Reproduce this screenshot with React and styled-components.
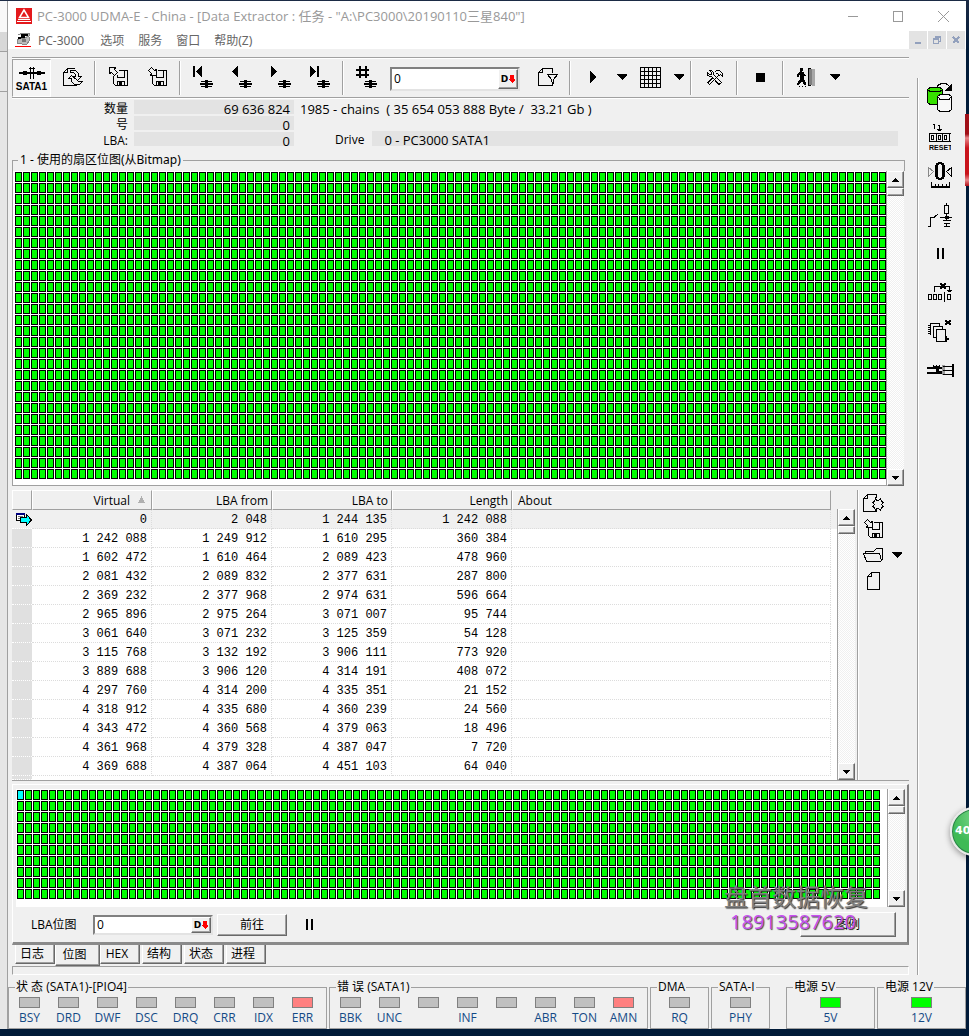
import React from "react";
import styled, { createGlobalStyle, css } from "styled-components";

const rows = [
  ["0", "2 048", "1 244 135", "1 242 088"],
  ["1 242 088", "1 249 912", "1 610 295", "360 384"],
  ["1 602 472", "1 610 464", "2 089 423", "478 960"],
  ["2 081 432", "2 089 832", "2 377 631", "287 800"],
  ["2 369 232", "2 377 968", "2 974 631", "596 664"],
  ["2 965 896", "2 975 264", "3 071 007", "95 744"],
  ["3 061 640", "3 071 232", "3 125 359", "54 128"],
  ["3 115 768", "3 132 192", "3 906 111", "773 920"],
  ["3 889 688", "3 906 120", "4 314 191", "408 072"],
  ["4 297 760", "4 314 200", "4 335 351", "21 152"],
  ["4 318 912", "4 335 680", "4 360 239", "24 560"],
  ["4 343 472", "4 360 568", "4 379 063", "18 496"],
  ["4 361 968", "4 379 328", "4 387 047", "7 720"],
  ["4 369 688", "4 387 064", "4 451 103", "64 040"],
];

const statusLeds = ["BSY", "DRD", "DWF", "DSC", "DRQ", "CRR", "IDX", "ERR"];
const errorLeds = ["BBK", "UNC", "", "INF", "", "ABR", "TON", "AMN"];
const tabs = ["日志", "位图", "HEX", "结构", "状态", "进程"];

const Icon = ({ w, h, children }) => (
  <Svg width={w} height={h} viewBox={`0 0 ${w} ${h}`} aria-hidden="true">
    {children}
  </Svg>
);

const Connector = ({ x, y }) => (
  <path
    transform={`translate(${x} ${y})`}
    d="M5 0h3v1h4v1H8v1h5v2H8v1h4v1H8v1H5V7H1V6h4V5H0V3h5V2H1V1h4z"
    fill="#000"
    stroke="none"
  />
);

const SataIcon = () => (
  <Icon w={26} h={12}>
    <path d="M0 5h26v2H0zM4 4h4v4H4zM18 4h4v4h-4z" fill="#000" stroke="none" />
    <path d="M11.5 0V12M14.5 0V12M10 1.5H16" />
  </Icon>
);

const RefreshIcon = () => (
  <Icon w={20} h={18}>
    <path d="M12 .5H4.5L.5 4.5V17.5H13.5V16M1 4.5H4.5V1" />
    <path d="M7.5 2.5H12.5L15.5 5.5V8.5H18.5L14.5 12.5 10.5 8.5H12.5V6.5L10.5 4.5H7.5ZM19.5 13.5H15.5L12.5 10.5H11.5L8.5 7.5 5.5 10.5H8.5V13.5L11.5 16.5H16.5L19.5 13.5" />
  </Icon>
);

const SaveIcon = ({ into }) => (
  <Icon w={20} h={20}>
    <path d="M10 3.5H18.5V18.5H6.5L4.5 16.5V9M8.5 8V10.5H15.5V4M8.5 18V14.5H15.5V18" />
    <path d="M10 15h3v3h-3z" fill="#000" stroke="none" />
    <path
      fill="#f0f0f0"
      d={
        into
          ? "M3.5 .5L6.5 3.5 8.5 2.5V8.5H2.5L3.5 6.5 .5 3.5Z"
          : "M.5 .5H6.5L5.5 2.5 8.5 5.5 5.5 8.5 2.5 5.5 .5 6.5Z"
      }
    />
  </Icon>
);

const navShapes = {
  first: "M0 0h2v11H0zM9 0v11L3 6V5z",
  prev: "M6 0v11L0 6V5z",
  next: "M0 0v11L6 6V5z",
  last: "M0 0v11L6 6V5zM7 0h2v11H7z",
  goto: "M3 0h2v3h4V0h2v3h2v2h-2v3h2v2h-2v2H9v-2H5v2H3v-2H0V8h3V5H0V3h3zM5 5v3h4V5z",
};

const NavIcon = ({ kind }) => (
  <Icon w={21} h={22}>
    <path d={navShapes[kind]} fill="#000" stroke="none" fillRule="evenodd" />
    <Connector x={kind === "goto" ? 8 : 7} y={14} />
  </Icon>
);

const FilterDocIcon = () => (
  <Icon w={20} h={19}>
    <path d="M14.5 5V.5H4.5L.5 4.5V17.5H14.5V15M1 4.5H4.5V1" />
    <path d="M9.5 6.5H19.5L15.5 11.5V15.5L13.5 13.5V11.5Z" fill="#f0f0f0" />
  </Icon>
);

const GridIcon = () => (
  <Icon w={21} h={21}>
    {[0, 4, 8, 12, 16, 20].map((n) => (
      <path key={n} d={`M${n} 0h1v21h-1zM0 ${n}h21v1H0z`} fill="#000" stroke="none" />
    ))}
  </Icon>
);

const ToolsIcon = () => (
  <Icon w={16} h={15}>
    <path d="M2.5 .5L4.5 2.5V4.5H2.5L.5 2.5V5L2.5 6.5H4.5L12 14.5 14.5 12.5 6.5 4.5V2.5L4.5 .5Z" />
    <path d="M7.5 2.5L9.5 .5H12.5L15.5 3.5V6L13.5 4.5 12.5 5.5 10.5 3.5 9.5 4M11.5 5.5L2.5 14.5 1 12.5 6 7.5" />
  </Icon>
);

const ExitIcon = () => (
  <Icon w={20} h={19}>
    <path
      d="M3 0h3v3H5v1h2l1 3h1v1H7v3l2 4v2H7l-2-4-3 4H0v-1l3-5V7H2v2H0V6l3-2z"
      fill="#000"
      stroke="none"
    />
    <path d="M2 18h1v1H2zM5 18h1v1H5zM8 18h1v1H8z" fill="#000" stroke="none" />
    <path d="M11 0h3v18h-3z" fill="#000" stroke="none" />
    <path d="M12 1h3v16h-3z" fill="#808080" stroke="none" />
    <path d="M15 1h3v17h-3z" fill="#a8a8a8" stroke="none" />
  </Icon>
);

const DocIcon = () => (
  <Icon w={13} h={18}>
    <path d="M4.5 .5H12.5V17.5H.5V4.5ZM1 4.5H4.5V1" />
  </Icon>
);

const GearDocIcon = () => (
  <Icon w={21} h={18}>
    <path d="M13.5 4V.5H4.5L.5 4.5V17.5H13.5V15M1 4.5H4.5V1" />
    <path
      fill="#f0f0f0"
      d="M12.5 4.5L13.5 6.5H15.5L17.5 4.5 18.5 7.5 20.5 8.5 18.5 10.5 20.5 12.5 18.5 13.5 17.5 16.5 15.5 14.5H13.5L12.5 16.5 11.5 13.5 9.5 12.5 11.5 10.5 9.5 8.5 11.5 7.5Z"
    />
  </Icon>
);

const FolderIcon = () => (
  <Icon w={21} h={14}>
    <path d="M2.5 5V3.5H10.5L13.5 .5H19.5V11M16.5 5.5H.5L3.5 13.5H17.5L19.5 11.5M16.5 5.5L18.5 13" />
  </Icon>
);

const DisksIcon = () => (
  <Icon w={26} h={31}>
    <path d="M10 4.5L12 2.5 15 1.5H19L22.5 4.5" />
    <path d="M25 1v8h-8z" fill="#000" stroke="none" />
    <path d="M.5 7.5L3 5.5H13L15.5 7.5V20.5L13 22.5H3L.5 20.5Z" fill="#36e000" />
    <path d="M.5 7.5L3 9.5H13L15.5 7.5" />
    <path d="M10.5 14.5L13 12.5H22L24.5 14.5V27.5L22 29.5H13L10.5 27.5Z" fill="#f8f8f8" />
    <path d="M10.5 14.5L13 17.5H22L24.5 14.5" />
  </Icon>
);

const ResetIcon = () => (
  <Icon w={22} h={28}>
    <path d="M4 1.5H5.5V6M9 2.5H10.5V8M8 6.5H13M9 7.5H12" />
    <path d="M.5 10.5H21.5M.5 18.5H21.5M.5 10V19M7.5 10V19M13.5 10V19M20.5 10V19M2.5 12.5H4.5V16.5H2.5ZM9.5 12.5H11.5V16.5H9.5ZM15.5 12.5H17.5V16.5H15.5Z" />
    <SvgLabel x="0" y="27">
      RESET
    </SvgLabel>
  </Icon>
);

const ZeroIcon = () => (
  <Icon w={24} h={27}>
    <path
      d="M10 0h4v1h2v2h1v12h-1v2h-2v1h-4v-1H8v-2H7V3h1V1h2zM11 2v1h-1v12h1v1h2v-1h1V3h-1V2z"
      fill="#000"
      stroke="none"
      fillRule="evenodd"
    />
    <path d="M.5 5.5L5.5 9.5 .5 14.5Z" stroke="#888" />
    <path d="M23.5 5.5L18.5 9.5 23.5 14.5Z" />
    <path d="M3 24h19v2H3zM3 20h1v4H3zM7 22h1v2H7zM10 22h1v2h-1zM14 22h1v2h-1zM18 22h1v2h-1zM21 20h1v4h-1z" fill="#000" stroke="none" />
  </Icon>
);

const SwitchIcon = () => (
  <Icon w={24} h={24}>
    <path d="M0 23.5H2.5V14.5H6M6 14.5L10 11M18.5 0V3M16.5 2.5H20.5V10.5H16.5ZM18.5 11V17M12 14.5H24M14.5 17.5H22.5M15.5 20.5H21.5M18.5 20V23M16 23.5H22" />
    <path d="M17 13h4v3h-4z" fill="#000" stroke="none" />
  </Icon>
);

const PauseIcon = () => (
  <Icon w={7} h={11}>
    <path d="M0 0h2v11H0zM5 0h2v11H5z" fill="#000" stroke="none" />
  </Icon>
);

const SkipIcon = () => (
  <Icon w={24} h={19}>
    <path d="M6.5 9V3.5H21.5V8M.5 11.5H3.5V16.5H.5ZM5.5 11.5H8.5V16.5H5.5ZM10.5 11.5H13.5V16.5H10.5ZM16.5 9V19M19.5 11.5H22.5V16.5H19.5Z" />
    <path d="M12 0h2v1h2V0h2v2h-1v2h1v2h-2V5h-2v1h-2V4h1V2h-1zM19 7h5v1h-1v1h-3V8h-1z" fill="#000" stroke="none" />
  </Icon>
);

const CopyStackIcon = () => (
  <Icon w={24} h={23}>
    <path d="M2 3.5H11.5V6M2.5 3V15M0 5.5H2M0 7.5H2M0 9.5H2M0 11.5H2M0 13.5H2M8 17.5H5.5V6.5H14.5V9" />
    <path d="M8.5 9.5H17.5V21.5H8.5Z" />
    <path d="M17 0h2v1h2V0h2v2h-1v1h1v2h-2V4h-2v1h-2V3h1V2h-1zM17 16h2v2h2v2h-2v2h-2z" fill="#000" stroke="none" />
  </Icon>
);

const PlugIcon = () => (
  <Icon w={27} h={13}>
    <path d="M0 3h6V1h1v1h2V1h1v1h2V1h1v2h2v2h-3v2h3v3H0V8h9V5H0z" fill="#000" stroke="none" />
    <path d="M15 1h3v10h-3z" fill="#999" stroke="none" />
    <path d="M16 2.5H25M16 6.5H25M16 10.5H25" />
    <path d="M25 0h2v13h-2z" fill="#000" stroke="none" />
  </Icon>
);

const Triangle = ({ dir = "down", small }) => (
  <Icon w={small ? 7 : 10} h={small ? 4 : 6}>
    <path
      d={
        small
          ? dir === "up"
            ? "M3 0h1v1h1v1h1v1h1v1H0V3h1V2h1V1h1z"
            : "M0 0h7v1H6v1H5v1H4v1H3V3H2V2H1V1H0z"
          : "M0 0h10v1L5 6 0 1z"
      }
      fill="#000"
      stroke="none"
    />
  </Icon>
);

const ScrollBar = ({ label }) => (
  <ScrollTrack>
    <ScrollButton aria-label={`${label} up`}>
      <Triangle dir="up" small />
    </ScrollButton>
    <ScrollThumb />
    <ScrollSpace />
    <ScrollButton aria-label={`${label} down`}>
      <Triangle small />
    </ScrollButton>
  </ScrollTrack>
);

const NumberField = ({ id, label, $width }) => (
  <FieldBox $width={$width}>
    <FieldInput id={id} aria-label={label} defaultValue="0" />
    <FieldButton aria-label="Decimal">
      D
      <Icon w={6} h={8}>
        <path d="M1 0h4v4h1v1L3 8 0 5V4h1z" fill="#f00" stroke="none" />
      </Icon>
    </FieldButton>
  </FieldBox>
);

const LedGroup = ({ title, names, on, color, spaced }) => (
  <LedBox $spaced={spaced}>
    <LedLegend>{title}</LedLegend>
    <LedRow $many={names.length > 1}>
      {names.map((name, i) => (
        <LedItem key={i}>
          <Led $color={on === i ? color : "#c0c0c0"} />
          <LedName>{name}</LedName>
        </LedItem>
      ))}
    </LedRow>
  </LedBox>
);

const App = () => {
  return (
    <Desktop>
      <GlobalStyle />
      <BackWindow />
      <Window>
        <TitleBar>
          <Icon w={16} h={16}>
            <path d="M0 0h16v16H0z" fill="#e3191c" stroke="none" />
            <path d="M8 2L3.5 9.5H12.5Z" fill="none" stroke="#fff" strokeWidth="1.5" shapeRendering="auto" />
            <path d="M5 9h6v1H5zM2 11h12v1H2zM1 13h14v1H1z" fill="#fff" stroke="none" />
          </Icon>
          <Title>
            PC-3000 UDMA-E - China - [Data Extractor : 任务 -
            &quot;A:\PC3000\20190110三星840&quot;]
          </Title>
          <CaptionButton aria-label="Minimize">
            <Icon w={11} h={11}>
              <path d="M0 5.5H10" stroke="#999" />
            </Icon>
          </CaptionButton>
          <CaptionButton aria-label="Maximize">
            <Icon w={11} h={11}>
              <path d="M.5 .5H9.5V10.5H.5Z" stroke="#999" fill="none" />
            </Icon>
          </CaptionButton>
          <CaptionButton aria-label="Close">
            <Icon w={11} h={11}>
              <path d="M0 0L11 11M11 0L0 11" stroke="#999" shapeRendering="auto" />
            </Icon>
          </CaptionButton>
        </TitleBar>

        <MenuBar>
          <Icon w={16} h={14}>
            <path d="M3 2L7 0H14V3L10 5H4L2 8V10L7 11H12L14 8V4" fill="#bbb" stroke="#888" />
            <path d="M6 1h7v2h-3v2H6v1H3V4h3z" fill="#000" stroke="none" />
            <path d="M7 6h4v3H7z" fill="#777" stroke="none" />
            <path d="M0 13h16v1H0z" fill="#f00" stroke="none" />
          </Icon>
          <MenuItem>PC-3000</MenuItem>
          <MenuItem>选项</MenuItem>
          <MenuItem>服务</MenuItem>
          <MenuItem>窗口</MenuItem>
          <MenuItem>帮助(Z)</MenuItem>
          <ChildButtons>
            <ChildButton aria-label="Minimize child">
              <Icon w={8} h={8}>
                <path d="M1 6h6v2H1z" fill="#93a1bd" stroke="none" />
              </Icon>
            </ChildButton>
            <ChildButton aria-label="Restore child">
              <Icon w={8} h={8}>
                <path d="M2.5 2V.5H7.5V5.5H6M.5 3.5H5.5V7.5H.5ZM0 2.5H6M2 1.5H8" stroke="#93a1bd" fill="none" />
              </Icon>
            </ChildButton>
            <ChildButton aria-label="Close child">
              <Icon w={8} h={8}>
                <path d="M1 1L7 7M7 1L1 7" stroke="#93a1bd" strokeWidth="2" />
              </Icon>
            </ChildButton>
          </ChildButtons>
        </MenuBar>

        <Body>
          <Main>
            <Toolbar>
              <PortButton>
                <SataIcon />
                SATA1
              </PortButton>
              <ToolButton aria-label="Refresh">
                <RefreshIcon />
              </ToolButton>
              <Separator />
              <ToolButton aria-label="Load map">
                <SaveIcon />
              </ToolButton>
              <ToolButton aria-label="Save map">
                <SaveIcon into />
              </ToolButton>
              <Separator />
              {["first", "prev", "next", "last"].map((kind) => (
                <ToolButton key={kind} aria-label={kind}>
                  <NavIcon kind={kind} />
                </ToolButton>
              ))}
              <Separator />
              <ToolButton aria-label="Go to">
                <NavIcon kind="goto" />
              </ToolButton>
              <NumberField id="chain" label="Chain number" $width="130px" />
              <ToolButton aria-label="Filter">
                <FilterDocIcon />
              </ToolButton>
              <Separator />
              <ToolButton aria-label="Start">
                <Icon w={7} h={12}>
                  <path d="M0 0l7 6-7 6z" fill="#000" stroke="none" />
                </Icon>
              </ToolButton>
              <ArrowButton aria-label="Start options">
                <Triangle />
              </ArrowButton>
              <ToolButton aria-label="Map">
                <GridIcon />
              </ToolButton>
              <ArrowButton aria-label="Map options">
                <Triangle />
              </ArrowButton>
              <Separator />
              <ToolButton aria-label="Tools">
                <ToolsIcon />
              </ToolButton>
              <Separator />
              <ToolButton aria-label="Stop">
                <Icon w={9} h={9}>
                  <path d="M0 0h9v9H0z" fill="#000" stroke="none" />
                </Icon>
              </ToolButton>
              <Separator />
              <ToolButton aria-label="Exit">
                <ExitIcon />
              </ToolButton>
              <ArrowButton aria-label="Exit options">
                <Triangle />
              </ArrowButton>
            </Toolbar>

            <Info>
              <Counters>
                <InfoLabel>数量</InfoLabel>
                <InfoValue>69 636 824</InfoValue>
                <InfoLabel>号</InfoLabel>
                <InfoValue>0</InfoValue>
                <InfoLabel>LBA:</InfoLabel>
                <InfoValue>0</InfoValue>
              </Counters>
              <Summary>
                <Chains>1985 - chains&nbsp; ( 35 654 053 888 Byte /&nbsp; 33.21 Gb )</Chains>
                <Drive>
                  Drive
                  <DriveName>0 - PC3000 SATA1</DriveName>
                </Drive>
              </Summary>
            </Info>

            <MapGroup>
              <MapLegend>1 - 使用的扇区位图(从Bitmap)</MapLegend>
            </MapGroup>
            <MapPanel>
              <MapArea>
                <Cells $rows={28} />
              </MapArea>
              <ScrollBar label="Map" />
            </MapPanel>

            <ChainArea>
              <ChainTable>
                <colgroup>
                  <col width="20" />
                  <col width="120" />
                  <col width="120" />
                  <col width="120" />
                  <col width="120" />
                  <col />
                  <col width="6" />
                </colgroup>
                <thead>
                  <tr>
                    <Th />
                    <Th>
                      Virtual
                      <SortMark>
                        <Icon w={7} h={7}>
                          <path d="M3.5 0L7 7H0Z" fill="#b0b0b0" stroke="none" />
                        </Icon>
                      </SortMark>
                    </Th>
                    <Th>LBA from</Th>
                    <Th>LBA to</Th>
                    <Th>Length</Th>
                    <Th $left>About</Th>
                    <Blank as="th" />
                  </tr>
                </thead>
                <tbody>
                  {rows.map((row, i) => (
                    <Row key={row[0]} $current={i === 0}>
                      <Marker $current={i === 0}>
                        {i === 0 && (
                          <Icon w={16} h={13}>
                            <path d="M.5 .5H8.5V7.5H.5Z" fill="#fff" />
                            <path d="M0 0h9v2H0z" fill="#000080" stroke="none" />
                            <path d="M2 3.5H7M2 5.5H5" stroke="#777" />
                            <path d="M4.5 4.5H10.5V1.5L15.5 7 10.5 12.5V9.5H4.5Z" fill="#0ff" />
                          </Icon>
                        )}
                      </Marker>
                      {row.map((cell, n) => (
                        <Td key={n}>{cell}</Td>
                      ))}
                      <Td />
                      <Blank />
                    </Row>
                  ))}
                  <CutRow>
                    <Marker />
                    <td colSpan={6} />
                  </CutRow>
                </tbody>
              </ChainTable>
              <ChainScroll>
                <ScrollBar label="Chains" />
              </ChainScroll>
              <ChainTools>
                <ChainButton aria-label="New map">
                  <GearDocIcon />
                </ChainButton>
                <ChainButton aria-label="Save list">
                  <SaveIcon into />
                </ChainButton>
                <ChainButton aria-label="Open list">
                  <FolderIcon />
                  <Triangle />
                </ChainButton>
                <ChainButton aria-label="Clear list">
                  <DocIcon />
                </ChainButton>
              </ChainTools>
            </ChainArea>

            <LowerPanel>
              <LowerMap>
                <LowerMapArea>
                  <Cells $rows={10} $marked />
                </LowerMapArea>
                <ScrollBar label="LBA map" />
              </LowerMap>
              <LowerControls>
                <label htmlFor="lba">LBA位图</label>
                <NumberField id="lba" label="LBA位图" $width="120px" />
                <PushButton $width="70px">前往</PushButton>
                <PauseButton aria-label="Pause">
                  <PauseIcon />
                </PauseButton>
                <LegendButton $width="96px">图例</LegendButton>
              </LowerControls>
              <Watermark>
                <WatermarkName>盘首数据恢复</WatermarkName>
                <WatermarkPhone>18913587620</WatermarkPhone>
              </Watermark>
            </LowerPanel>
            <Tabs role="tablist">
              {tabs.map((tab) => (
                <Tab key={tab} role="tab" aria-selected={tab === "位图"} $active={tab === "位图"}>
                  {tab}
                </Tab>
              ))}
            </Tabs>
            <Progress />
          </Main>

          <Sidebar>
            {[DisksIcon, ResetIcon, ZeroIcon, SwitchIcon, PauseIcon, SkipIcon, CopyStackIcon, PlugIcon].map(
              (Glyph, i) => (
                <SideButton key={i} aria-label={`Command ${i + 1}`}>
                  <Glyph />
                </SideButton>
              )
            )}
          </Sidebar>
        </Body>

        <StatusBar>
          <LedGroup title="状 态 (SATA1)-[PIO4]" names={statusLeds} on={7} color="#ff8080" />
          <LedGroup title="错 误 (SATA1)" names={errorLeds} on={7} color="#ff8080" />
          <LedGroup title="DMA" names={["RQ"]} />
          <LedGroup title="SATA-I" names={["PHY"]} />
          <LedGroup title="电源 5V" names={["5V"]} on={0} color="#0f0" spaced />
          <LedGroup title="电源 12V" names={["12V"]} on={0} color="#0f0" />
        </StatusBar>
      </Window>
      <RedTag />
      <Bubble>40</Bubble>
    </Desktop>
  );
};

const raised = css`
  border: 1px solid;
  border-color: #fff #696969 #696969 #fff;
  box-shadow: inset -1px -1px 0 #a0a0a0;
  background: #f0f0f0;
`;
const bareButton = css`
  display: flex;
  align-items: center;
  justify-content: center;
  padding: 0;
  border: none;
  background: none;
`;

const GlobalStyle = createGlobalStyle`
  * {
    box-sizing: border-box;
  }
  body {
    margin: 0;
    background: #001a38;
    color: #000;
    font: 12px/16px "Open Sans", "Noto Sans CJK SC", sans-serif;
  }
  button, input {
    color: inherit;
    font: inherit;
  }
`;
const Svg = styled.svg`
  display: block;
  flex: none;
  fill: none;
  stroke: #000;
  shape-rendering: crispEdges;
`;
const SvgLabel = styled.text`
  font: bold 7px "Liberation Sans", sans-serif;
  fill: #000;
  stroke: none;
`;
const Desktop = styled.div`
  position: relative;
  display: flex;
  overflow: hidden;
  padding: 1px 3px 8px 0;
  background: linear-gradient(#1c2b45, #001a38 50px);
`;
const BackWindow = styled.div`
  flex: none;
  width: 8px;
  border-right: 1px solid #a0a0a0;
  background: linear-gradient(
    #f8f8f8 31px,
    #d8d8d8 31px 50px,
    #a0a0a0 50px 51px,
    #e6e6e6 51px 90px,
    #a0a0a0 90px 91px,
    #e6e6e6 91px
  );
`;
const Window = styled.div`
  flex: 1;
  min-width: 0;
  background: #f0f0f0;
`;
const TitleBar = styled.header`
  display: flex;
  align-items: center;
  height: 30px;
  padding-left: 8px;
  background: #fff;
  color: #999;
`;
const Title = styled.h1`
  flex: 1;
  margin: 0 0 0 5px;
  font-size: 13px;
  font-weight: 400;
  white-space: nowrap;
`;
const CaptionButton = styled.button`
  ${bareButton}
  width: 45px;
  height: 28px;
`;
const MenuBar = styled.nav`
  display: flex;
  align-items: center;
  gap: 14px;
  height: 18px;
  padding-left: 7px;
  background: #fff;
  color: #666;
  font-family: "Noto Sans", "Noto Sans CJK SC", sans-serif;
`;
const MenuItem = styled.button`
  ${bareButton}
  padding-top: 2px;
  &:first-of-type {
    margin: 0 2px 0 -7px;
  }
`;
const ChildButtons = styled.div`
  display: flex;
  gap: 1px;
  margin-left: auto;
  padding-right: 1px;
`;
const ChildButton = styled.button`
  ${bareButton}
  width: 18px;
  height: 18px;
  background: #e3e3e3;
`;
const Body = styled.div`
  display: flex;
  gap: 8px;
`;
const Main = styled.main`
  flex: 1;
  min-width: 0;
  padding: 8px 0 0 4px;
`;
const Toolbar = styled.div`
  display: flex;
  height: 42px;
  border-top: 1px solid #a0a0a0;
  border-bottom: 1px solid #fff;
  box-shadow: inset 0 1px 0 #fff, inset 0 -1px 0 #a0a0a0;
`;
const ToolButton = styled.button`
  ${bareButton}
  width: 39px;
  height: 38px;
`;
const PortButton = styled(ToolButton)`
  flex-direction: column;
  gap: 2px;
  margin: 1px 2px 0 0;
  padding-top: 2px;
  border: 1px solid;
  border-color: #a0a0a0 #fff #fff #a0a0a0;
  background: #f6f6f6;
  font: bold 10px/11px "Liberation Sans", sans-serif;
`;
const ArrowButton = styled(ToolButton)`
  width: 18px;
`;
const Separator = styled.div`
  width: 2px;
  height: 34px;
  margin: 3px 3px 0 2px;
  border-left: 1px solid #a0a0a0;
  border-right: 1px solid #fff;
`;
const FieldBox = styled.div`
  display: flex;
  width: ${(props) => props.$width};
  height: 24px;
  border: 2px solid;
  border-color: #808080 #e3e3e3 #e3e3e3 #808080;
  background: #fff;
  ${Toolbar} & {
    margin: 9px 8px 0 4px;
  }
`;
const FieldInput = styled.input`
  flex: 1;
  min-width: 0;
  padding: 0 2px;
  border: none;
  background: none;
  outline: none;
`;
const FieldButton = styled.button`
  ${bareButton}
  ${raised}
  gap: 1px;
  width: 20px;
  font: bold 9px/10px "DejaVu Sans", sans-serif;
`;
const Info = styled.section`
  display: flex;
  gap: 6px;
  padding: 1px 0 3px;
  line-height: 18px;
`;
const Counters = styled.div`
  display: grid;
  grid-template-columns: 116px 160px;
  grid-auto-rows: 14px;
  gap: 2px 6px;
  padding-bottom: 2px;
  text-align: right;
`;
const InfoLabel = styled.span``;
const InfoValue = styled.output`
  padding-right: 4px;
  background: #e3e3e3;
  font-size: 13px;
`;
const Summary = styled.div`
  flex: 1;
`;
const Chains = styled.div`
  font-size: 13px;
`;
const Drive = styled.div`
  display: flex;
  gap: 8px;
  margin: 13px 11px 0 0;
  padding-left: 35px;
`;
const DriveName = styled.output`
  flex: 1;
  height: 15px;
  padding-left: 12px;
  background: #e3e3e3;
  font-size: 13px;
`;
const MapGroup = styled.fieldset`
  height: 19px;
  margin: 0 4px 0 0;
  padding: 0;
  border: 1px solid #a0a0a0;
  border-bottom: none;
`;
const MapLegend = styled.legend`
  margin-left: 5px;
  padding: 0 2px;
  font-family: "Noto Sans", "Noto Sans CJK SC", sans-serif;
`;
const MapPanel = styled.section`
  display: flex;
  margin-right: 5px;
`;
const MapArea = styled.div`
  flex: 1;
  padding: 1px 0 5px 2px;
  border: 1px solid #a0a0a0;
  border-width: 0 0 1px 1px;
  background: #fff;
`;
/* sector cells: 7x10 with a black frame, one pixel apart */
const Cells = styled.div`
  height: ${(props) => props.$rows * 11}px;
  background: linear-gradient(90deg, transparent 7px, #fff 7px) 0 0 / 8px 11px,
    linear-gradient(transparent 10px, #fff 10px) 0 0 / 8px 11px,
    linear-gradient(90deg, #000 1px, transparent 1px 6px, #000 6px) 0 0 / 8px 11px,
    linear-gradient(#000 1px, transparent 1px 9px, #000 9px) 0 0 / 8px 11px, #0f0;
  ${(props) =>
    props.$marked &&
    css`
      &::before {
        content: "";
        float: left;
        width: 5px;
        height: 8px;
        margin: 1px;
        background: #0ff;
      }
    `}
`;
const ScrollTrack = styled.div`
  display: flex;
  flex: none;
  flex-direction: column;
  width: 18px;
  border-left: 1px solid #a0a0a0;
  background: repeating-conic-gradient(#f0f0f0 0 25%, #fff 0 50%) 0 0 / 2px 2px;
`;
const ScrollButton = styled.button`
  ${bareButton}
  ${raised}
  height: 17px;
`;
const ScrollThumb = styled.div`
  ${raised}
  height: 8px;
`;
const ScrollSpace = styled.div`
  flex: 1;
`;
const ChainArea = styled.section`
  display: flex;
  margin-top: 4px;
  border-bottom: 1px solid #a0a0a0;
`;
const ChainTable = styled.table`
  flex: 1;
  min-width: 0;
  table-layout: fixed;
  border-spacing: 0;
  background: #fff;
`;
const Th = styled.th`
  height: 20px;
  padding: 2px 3px 0 5px;
  border: 1px solid;
  border-color: #fff #a0a0a0 #a0a0a0 #fff;
  background: #f0f0f0;
  font-weight: 400;
  text-align: ${(props) => (props.$left ? "left" : "right")};
`;
const SortMark = styled.span`
  display: inline-block;
  margin: 0 3px 0 8px;
  vertical-align: 2px;
`;
const Row = styled.tr`
  background: ${(props) => (props.$current ? "#f0f0f0" : "#fff")};
`;
const Td = styled.td`
  height: 19px;
  padding: 2px 4px 0 0;
  border: 1px dotted #dcdcdc;
  border-width: 0 1px 1px 0;
  font: 12px/16px "Liberation Mono", monospace;
  text-align: right;
`;
const Marker = styled.td`
  padding: 1px 0 0 4px;
  border-bottom: 1px dotted #fff;
  background: ${(props) => (props.$current ? "#f0f0f0" : "#e0e0e0")};
`;
const Blank = styled.td`
  padding: 0;
  th& {
    background: #f0f0f0;
  }
`;
const CutRow = styled.tr`
  height: 4px;
  td {
    padding: 0;
  }
`;
const ChainScroll = styled.div`
  display: flex;
  padding-top: 19px;
`;
const ChainTools = styled.div`
  flex: none;
  width: 52px;
  margin-left: 2px;
  padding-left: 5px;
  border-left: 1px solid #a0a0a0;
  box-shadow: inset 1px 0 0 #fff;
`;
const ChainButton = styled.button`
  ${bareButton}
  gap: 8px;
  min-width: 21px;
  height: 26px;
`;
const LowerPanel = styled.section`
  position: relative;
  margin-top: 3px;
  padding: 4px 2px 0 3px;
  border: 1px solid #fff;
  border-right: 2px solid #808080;
  border-bottom: 3px solid #8a8a8a;
`;
const LowerMap = styled.div`
  display: flex;
`;
const LowerMapArea = styled.div`
  flex: 1;
  padding: 1px 7px 7px 1px;
  background: #fff;
`;
const LowerControls = styled.div`
  display: flex;
  align-items: center;
  height: 35px;
  padding: 0 9px 0 15px;
  label {
    width: 62px;
  }
  ${FieldBox} {
    height: 20px;
    margin-right: 4px;
  }
`;
const PushButton = styled.button`
  ${raised}
  width: ${(props) => props.$width};
  height: 22px;
  padding: 0;
`;
const PauseButton = styled.button`
  ${bareButton}
  width: 44px;
  height: 22px;
`;
const LegendButton = styled(PushButton)`
  height: 25px;
  margin-left: auto;
`;
const Watermark = styled.div`
  position: absolute;
  right: 37px;
  bottom: 8px;
  width: 148px;
  text-align: center;
  pointer-events: none;
`;
const WatermarkName = styled.div`
  color: #808080;
  font-size: 24px;
  line-height: 26px;
  text-shadow: 1px 1px 1px #333;
`;
const WatermarkPhone = styled.div`
  margin-right: 6px;
  color: #c850f0;
  font-size: 20px;
  line-height: 24px;
  text-shadow: 1px 1px 1px #444;
`;
const Tabs = styled.div`
  display: flex;
  align-items: flex-start;
  gap: 2px;
  height: 20px;
  padding-left: 3px;
`;
const Tab = styled.button`
  ${raised}
  width: 40px;
  height: 19px;
  padding: 0 6px 0 0;
  border-top: none;
  ${(props) =>
    props.$active &&
    css`
      width: 45px;
      height: 21px;
      margin: 0 -2px;
    `}
`;
const Progress = styled.div`
  height: 9px;
  margin-top: 1px;
  border: 1px solid;
  border-color: #a0a0a0 #fff #fff #a0a0a0;
`;
const Sidebar = styled.aside`
  flex: none;
  width: 49px;
  margin-top: 29px;
  padding-right: 4px;
  border-left: 1px solid #a0a0a0;
  box-shadow: inset 1px 0 0 #fff;
`;
const SideButton = styled.button`
  ${bareButton}
  width: 100%;
  height: 39px;
`;
const StatusBar = styled.footer`
  display: grid;
  grid-template-columns: 319fr 319fr 59fr 59fr 103fr 89fr;
  gap: 2px;
  padding-top: 4px;
`;
const LedBox = styled.fieldset`
  min-width: 0;
  height: 50px;
  margin: 0 0 0 ${(props) => (props.$spaced ? "14px" : "0")};
  padding: 0;
  border: 1px solid #a0a0a0;
`;
const LedLegend = styled.legend`
  margin-left: 6px;
  padding: 0 1px;
  white-space: nowrap;
`;
const LedRow = styled.div`
  display: flex;
  padding: ${(props) => (props.$many ? "2px 4px 0 1px" : "2px 0 0")};
`;
const LedItem = styled.div`
  display: flex;
  flex: 1;
  flex-direction: column;
  align-items: center;
  gap: 2px;
  min-width: 0;
`;
const Led = styled.span`
  width: 21px;
  height: 11px;
  border: 1px solid #808080;
  background: ${(props) => props.$color};
`;
const LedName = styled.span`
  height: 16px;
  color: #144a86;
`;
const RedTag = styled.div`
  position: absolute;
  top: 114px;
  right: 0;
  width: 4px;
  height: 72px;
  background: linear-gradient(#a01018 0 20px, #e8888c 24px, #c8141c 34px 60px, #e8888c 66px, #b01018);
`;
const Bubble = styled.div`
  position: absolute;
  top: 807px;
  right: -30px;
  width: 49px;
  height: 49px;
  padding-left: 3px;
  border: 2px solid #e8e8e8;
  border-radius: 50%;
  background: radial-gradient(circle at 60% 20%, #7ed890, #3fba55 60%);
  box-shadow: inset 0 0 0 1px #2b7f4a, 0 2px 6px rgb(0 0 0 / 40%);
  color: #fff;
  font: bold 11px/44px "DejaVu Sans", sans-serif;
`;

export default App;
